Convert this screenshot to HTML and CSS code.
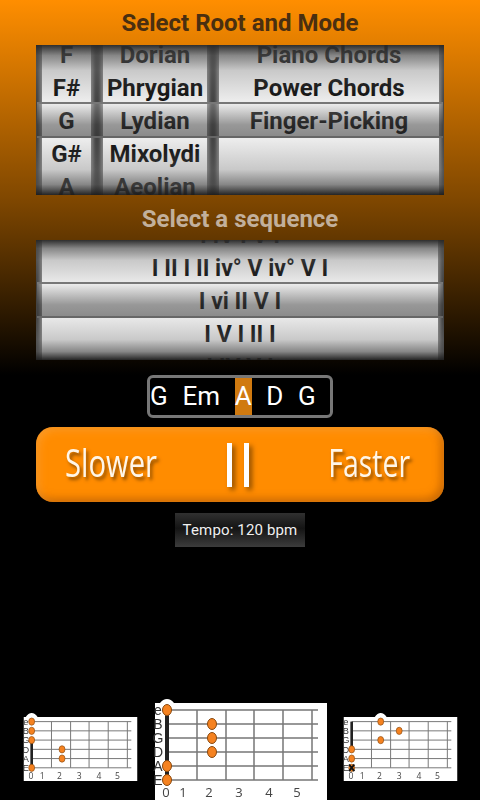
FILE: index.html
```html
<!DOCTYPE html>
<html lang="en">
<head>
<meta charset="utf-8">
<title>Chord Progressions</title>
<link rel="stylesheet" href="styles.css">
</head>
<body>
<main class="screen">
  <h1 class="title title-dark">Select Root and Mode</h1>
  <section class="wheel wheel-root">
    <div class="col col-a">
      <div class="row">F</div><div class="row">F#</div><div class="row">G</div><div class="row">G#</div><div class="row">A</div>
    </div>
    <div class="col col-b">
      <div class="row">Dorian</div><div class="row">Phrygian</div><div class="row">Lydian</div><div class="row">Mixolydi</div><div class="row">Aeolian</div>
    </div>
    <div class="col col-c">
      <div class="row">Piano Chords</div><div class="row">Power Chords</div><div class="row">Finger-Picking</div><div class="row"></div><div class="row"></div>
    </div>
    <div class="band"></div>
    <div class="shade"></div>
  </section>
  <h2 class="title title-light">Select a sequence</h2>
  <section class="wheel wheel-seq">
    <div class="col col-full">
      <div class="row">I IV I V I</div><div class="row">I II I II iv° V iv° V I</div><div class="row">I vi II V I</div><div class="row">I V I II I</div><div class="row">I IV V I</div>
    </div>
    <div class="band"></div>
    <div class="shade"></div>
  </section>
  <div class="chords">
    <span class="chord">G</span><span class="chord">Em</span><span class="chord chord-on">A</span><span class="chord">D</span><span class="chord">G</span>
  </div>
  <div class="tempo-bar">
    <span class="tempo-word tempo-slower">Slower</span>
    <span class="pause"><i></i><i></i></span>
    <span class="tempo-word tempo-faster">Faster</span>
  </div>
  <div class="toast">Tempo: 120 bpm</div>
  <div class="diagrams">
    <svg class="diagram small" viewBox="0 0 172 97">
      <path class="bump" d="M0 0h3q4-6 9-6t9 6h151v97H0z"/>
      <g class="grid"><path d="M12 7H163M12 21H163M12 35H163M12 49H163M12 63H163M12 77H163M42 7V77M71 7V77M99 7V77M128 7V77M157 7V77"/></g>
      <path class="nut" d="M12 35V77"/>
      <g class="labels"><text x="3" y="12">e</text><text x="3" y="26">B</text><text x="3" y="40">G</text><text x="3" y="54">D</text><text x="3" y="68">A</text><text x="3" y="82">E</text></g>
      <g class="nums"><text x="11" y="94">0</text><text x="28" y="94">1</text><text x="54" y="94">2</text><text x="84" y="94">3</text><text x="114" y="94">4</text><text x="142" y="94">5</text></g>
      <g class="dots"><ellipse cx="12" cy="7" rx="4.5" ry="5.5"/><ellipse cx="12" cy="21" rx="4.5" ry="5.5"/><ellipse cx="12" cy="35" rx="4.5" ry="5.5"/><ellipse cx="58" cy="49" rx="4.5" ry="5.5"/><ellipse cx="58" cy="63" rx="4.5" ry="5.5"/><ellipse cx="12" cy="77" rx="4.5" ry="5.5"/></g>
    </svg>
    <svg class="diagram large" viewBox="0 0 172 97">
      <path class="bump" d="M0 0h5q3-4 7-4t7 4h153v97H0z"/>
      <g class="grid"><path d="M12 7H163M12 21H163M12 35H163M12 49H163M12 63H163M12 77H163M42 7V77M71 7V77M99 7V77M128 7V77M157 7V77"/></g>
      <path class="nut" d="M12 7V77"/>
      <g class="labels"><text x="3" y="12">e</text><text x="3" y="26">B</text><text x="3" y="40">G</text><text x="3" y="54">D</text><text x="3" y="68">A</text><text x="3" y="82">E</text></g>
      <g class="nums"><text x="11" y="94">0</text><text x="28" y="94">1</text><text x="54" y="94">2</text><text x="84" y="94">3</text><text x="114" y="94">4</text><text x="142" y="94">5</text></g>
      <g class="dots"><ellipse cx="12" cy="7" rx="4.5" ry="5.5"/><ellipse cx="57" cy="21" rx="4.5" ry="5.5"/><ellipse cx="57" cy="35" rx="4.5" ry="5.5"/><ellipse cx="57" cy="49" rx="4.5" ry="5.5"/><ellipse cx="12" cy="63" rx="4.5" ry="5.5"/><ellipse cx="12" cy="77" rx="4.5" ry="5.5"/></g>
    </svg>
    <svg class="diagram small" viewBox="0 0 172 97">
      <path class="bump" d="M0 0h47q4-6 9-6t9 6h107v97H0z"/>
      <g class="grid"><path d="M12 7H163M12 21H163M12 35H163M12 49H163M12 63H163M12 77H163M42 7V77M71 7V77M99 7V77M128 7V77M157 7V77"/></g>
      <path class="nut" d="M12 7V49"/>
      <g class="labels"><text x="3" y="12">e</text><text x="3" y="26">B</text><text x="3" y="40">G</text><text x="3" y="54">D</text><text x="3" y="68">A</text><text x="3" y="82">E</text></g>
      <g class="nums"><text x="11" y="94">0</text><text x="28" y="94">1</text><text x="54" y="94">2</text><text x="84" y="94">3</text><text x="114" y="94">4</text><text x="142" y="94">5</text></g>
      <g class="dots"><ellipse cx="56" cy="7" rx="4.5" ry="5.5"/><ellipse cx="84" cy="21" rx="4.5" ry="5.5"/><ellipse cx="56" cy="35" rx="4.5" ry="5.5"/><ellipse cx="12" cy="49" rx="4.5" ry="5.5"/><ellipse cx="12" cy="63" rx="4.5" ry="5.5"/><ellipse cx="12" cy="77" rx="4.5" ry="5.5"/></g>
      <path class="cross" d="M8 72l8 10M16 72l-8 10"/>
    </svg>
  </div>
</main>
</body>
</html>
```
FILE: styles.css
```css
* { box-sizing: border-box; }
html, body { margin: 0; background: #000; }
.screen {
  width: 480px;
  height: 800px;
  overflow: hidden;
  display: flex;
  flex-direction: column;
  align-items: center;
  background: linear-gradient(180deg, #ff8e00 0, #7f4700 200px, #000 375px);
  font-family: Roboto, "Liberation Sans", sans-serif;
}
.title {
  margin: 0;
  height: 45px;
  line-height: 47px;
  font-size: 24px;
  font-weight: 700;
  text-align: center;
}
.title-dark { color: #4a2f10; }
.title-light { color: #c2b09c; line-height: 49px; }
.wheel {
  position: relative;
  width: 408px;
  display: flex;
  overflow: hidden;
  background: #404040;
  font-size: 24px;
  font-weight: 700;
  color: #111;
}
.wheel-root { height: 150px; }
.wheel-seq { height: 120px; font-size: 23px; }
.col {
  height: 100%;
  display: flex;
  flex-direction: column;
  justify-content: center;
  background: #ececec;
  box-shadow: 0 0 4px 2px #909090;
}
.col-a { width: 49px; margin: 0 12px 0 6px; }
.col-b { width: 104px; margin-right: 12px; }
.col-c { width: 220px; margin-right: 5px; }
.col-full { width: 396px; margin: 0 6px; }
.row {
  flex: 0 0 33px;
  height: 33px;
  padding-top: 1px;
  line-height: 33px;
  text-align: center;
  white-space: nowrap;
}
.band {
  position: absolute;
  left: 1px;
  right: 1px;
  top: 50%;
  height: 36px;
  margin-top: -18px;
  border-top: 2px solid #777;
  border-bottom: 2px solid #666;
  background: linear-gradient(180deg, rgba(235,235,235,.25) 0, rgba(60,60,60,.48) 65%, rgba(50,50,50,.52) 100%);
}
.shade {
  position: absolute;
  inset: 0;
  background: linear-gradient(180deg, rgba(40,40,40,.97) 0, rgba(80,80,80,.65) 7%, rgba(120,120,120,.3) 17%, rgba(120,120,120,0) 37%, rgba(120,120,120,0) 63%, rgba(120,120,120,.3) 83%, rgba(80,80,80,.65) 93%, rgba(30,30,30,.97) 100%);
}
.chords {
  margin-top: 15px;
  width: 186px;
  height: 43px;
  display: flex;
  gap: 14.7px;
  border: 3px solid #777;
  border-radius: 6px;
  background: #000;
  font-size: 26px;
  color: #fff;
}
.chord { line-height: 37px; }
.chord-on { background: #d07a10; width: 17px; text-align: center; }
.tempo-bar {
  margin-top: 9px;
  width: 408px;
  height: 75px;
  padding: 0 34px 0 29px;
  display: grid;
  grid-template-columns: 1fr auto 1fr;
  align-items: center;
  border-radius: 17px;
  background: #ff8c00;
  box-shadow: inset 3px 3px 8px rgba(255,190,110,.35), inset -3px -3px 8px rgba(150,70,0,.55);
}
.tempo-word {
  margin-bottom: 6px;
  font-family: "Open Sans", sans-serif;
  font-size: 39px;
  line-height: 42px;
  color: #fff6e8;
  text-shadow: 3px 3px 4px #8a4c00;
  white-space: nowrap;
}
.tempo-slower { justify-self: start; transform: scaleX(.75); transform-origin: left center; }
.tempo-faster { justify-self: end; transform: scaleX(.73); transform-origin: right center; }
.pause { display: flex; gap: 12px; }
.pause i {
  width: 5px;
  height: 44px;
  background: #fff;
  box-shadow: 3px 3px 5px #8a4c00;
}
.toast {
  margin-top: 11px;
  width: 130px;
  height: 34px;
  line-height: 34px;
  text-align: center;
  font-size: 15px;
  letter-spacing: .15px;
  color: #f0f0f0;
  background: linear-gradient(180deg, #303030 0, #141414 45%, #3c3c3c 100%);
}
.diagrams {
  margin-top: auto;
  width: 100%;
  height: 103px;
  padding: 0 22px 0 23px;
  display: flex;
  justify-content: space-between;
  align-items: center;
}
.diagram { display: block; overflow: visible; filter: blur(.35px); }
.small { width: 115px; height: 64px; }
.large { width: 172px; height: 97px; margin-top: 6px; }
.bump { fill: #fff; }
.grid path { fill: none; stroke: #777; stroke-width: 1.5; }
.nut { fill: none; stroke: #222; stroke-width: 4; }
.labels text { font-family: "Liberation Sans", sans-serif; font-size: 14px; fill: #333; text-anchor: middle; }
.nums text { font-family: "Open Sans", sans-serif; font-size: 13px; fill: #444; text-anchor: middle; }
.dots ellipse { fill: #f58220; stroke: #8a4a10; stroke-width: 1; }
.cross { fill: none; stroke: #111; stroke-width: 3; }
```
